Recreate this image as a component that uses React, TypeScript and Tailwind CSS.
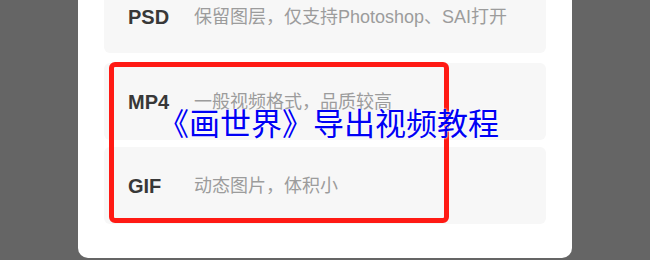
const formats = [
  { name: "PSD", desc: "保留图层，仅支持Photoshop、SAI打开" },
  { name: "MP4", desc: "一般视频格式，品质较高" },
  { name: "GIF", desc: "动态图片，体积小" },
];

function FormatRow({ name, desc, className }: { name: string; desc: string; className: string }) {
  return (
    <div className={`flex items-center rounded-md bg-[#f7f7f7] pl-6 ${className}`}>
      <span
        className="w-[66px] shrink-0 text-[20px] font-bold leading-none text-[#383838]"
        style={{ fontFamily: '"Liberation Sans", Arial, sans-serif' }}
      >
        {name}
      </span>
      <span className="text-[18px] leading-none text-[#9c9c9c]">{desc}</span>
    </div>
  );
}

export default function App() {
  return (
    <div
      className="h-[260px] w-[650px] overflow-hidden bg-[#656565]"
      style={{ fontFamily: '"Liberation Sans", "Noto Sans CJK SC", sans-serif' }}
    >
      <div className="relative ml-[78px] flex w-[494px] flex-col rounded-b-[10px] bg-white px-[26px] pb-[34px]">
        <FormatRow name={formats[0].name} desc={formats[0].desc} className="h-[53px] rounded-t-none pb-[20px]" />
        <FormatRow name={formats[1].name} desc={formats[1].desc} className="mt-[10px] h-[77px]" />
        <FormatRow name={formats[2].name} desc={formats[2].desc} className="mt-[7px] h-[77px]" />

        {/* red highlight box */}
        <div className="absolute left-[31px] top-[62px] h-[161px] w-[340px] rounded-md border-[5px] border-[#ff1a14]" />

        {/* title overlay */}
        <div
          className="absolute left-[80px] top-[106px] whitespace-nowrap text-[31px] leading-none text-[#0000f5]"
          style={{ fontFamily: '"Noto Sans CJK SC", sans-serif', textShadow: "0 0 2px #fff, 0 0 2px #fff" }}
        >
          《画世界》导出视频教程
        </div>
      </div>
    </div>
  );
}
